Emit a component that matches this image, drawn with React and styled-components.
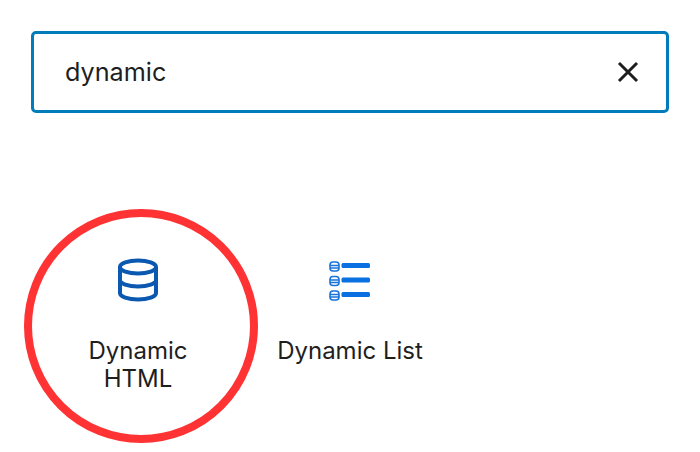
import React from 'react';
import styled, { createGlobalStyle } from 'styled-components';

const Global = createGlobalStyle`
  html, body { margin: 0; padding: 0; background: #fff; }
  body { font-family: Inter, "Liberation Sans", sans-serif; color: #1e1e1e; }
`;
const Page = styled.div`
  width: 700px; height: 452px; box-sizing: border-box; padding: 31px 31px 0 31px; overflow: hidden; position: relative;
`;
const SearchBox = styled.div`
  height: 82px; box-sizing: border-box; border: 3px solid #007cba; border-radius: 5px;
  display: flex; align-items: center; justify-content: space-between; padding: 0 23px 0 31px;
`;
const Query = styled.span`
  font-size: 25.2px; line-height: 30px; color: #1e1e1e;
`;
const Clear = styled.button`
  border: 0; background: none; padding: 0; display: flex; width: 30px; height: 30px;
`;
const Grid = styled.div`
  display: flex; margin-top: 144px; padding-left: 30px; gap: 62px;
`;
const Item = styled.div`
  width: ${p => p.$w}px; display: flex; flex-direction: column; align-items: center;
`;
const IconSlot = styled.div`
  height: 56px; box-sizing: border-box; padding-top: ${p => p.$top || 0}px; display: flex; align-items: flex-start; justify-content: center;
`;
const Label = styled.div`
  font-size: 24px; line-height: 28px; text-align: center; color: #1e1e1e; margin-top: 24px; white-space: nowrap;
`;
const Ring = styled.div`
  position: absolute; left: 24px; top: 209px; width: 234px; height: 234px; box-sizing: border-box;
  border: 8px solid #ff3333; border-radius: 50%;
`;

const DbIcon = () => (
  <svg width="42" height="46" viewBox="0 0 42 46" fill="none" stroke="#0a58b0" strokeWidth="4">
    <ellipse cx="21" cy="10" rx="18" ry="6.5" />
    <path d="M3 10v26c0 3.6 8 6.5 18 6.5s18-2.9 18-6.5V10" />
    <path d="M3 23c0 3.6 8 6.5 18 6.5s18-2.9 18-6.5" />
  </svg>
);
const MiniDb = ({ y }) => (
  <g transform={`translate(1 ${y})`} fill="none" stroke="#1a73d9" strokeWidth="1.6">
    <rect x="1" y="1" width="9" height="9" rx="3" />
    <path d="M1 4.5h9M1 7h9" />
  </g>
);
const ListIcon = () => (
  <svg width="44" height="42" viewBox="0 0 44 42">
    <MiniDb y={1} /><MiniDb y={15.5} /><MiniDb y={30} />
    <g fill="#0a6fe0">
      <rect x="13.5" y="3" width="28.5" height="5" rx="1.5" />
      <rect x="13.5" y="17.5" width="28.5" height="5" rx="1.5" />
      <rect x="13.5" y="32" width="28.5" height="5" rx="1.5" />
    </g>
  </svg>
);

export default function App() {
  return (
    <Page>
      <Global />
      <SearchBox>
        <Query>dynamic</Query>
        <Clear aria-label="clear">
          <svg width="30" height="30" viewBox="0 0 30 30" stroke="#1e1e1e" strokeWidth="3" fill="none">
            <path d="M6 6l18 18M24 6L6 24" />
          </svg>
        </Clear>
      </SearchBox>
      <Grid>
        <Item $w={154}>
          <IconSlot><DbIcon /></IconSlot>
          <Label>Dynamic<br />HTML</Label>
        </Item>
        <Item $w={146}>
          <IconSlot $top={3}><ListIcon /></IconSlot>
          <Label>Dynamic List</Label>
        </Item>
      </Grid>
      <Ring />
    </Page>
  );
}
